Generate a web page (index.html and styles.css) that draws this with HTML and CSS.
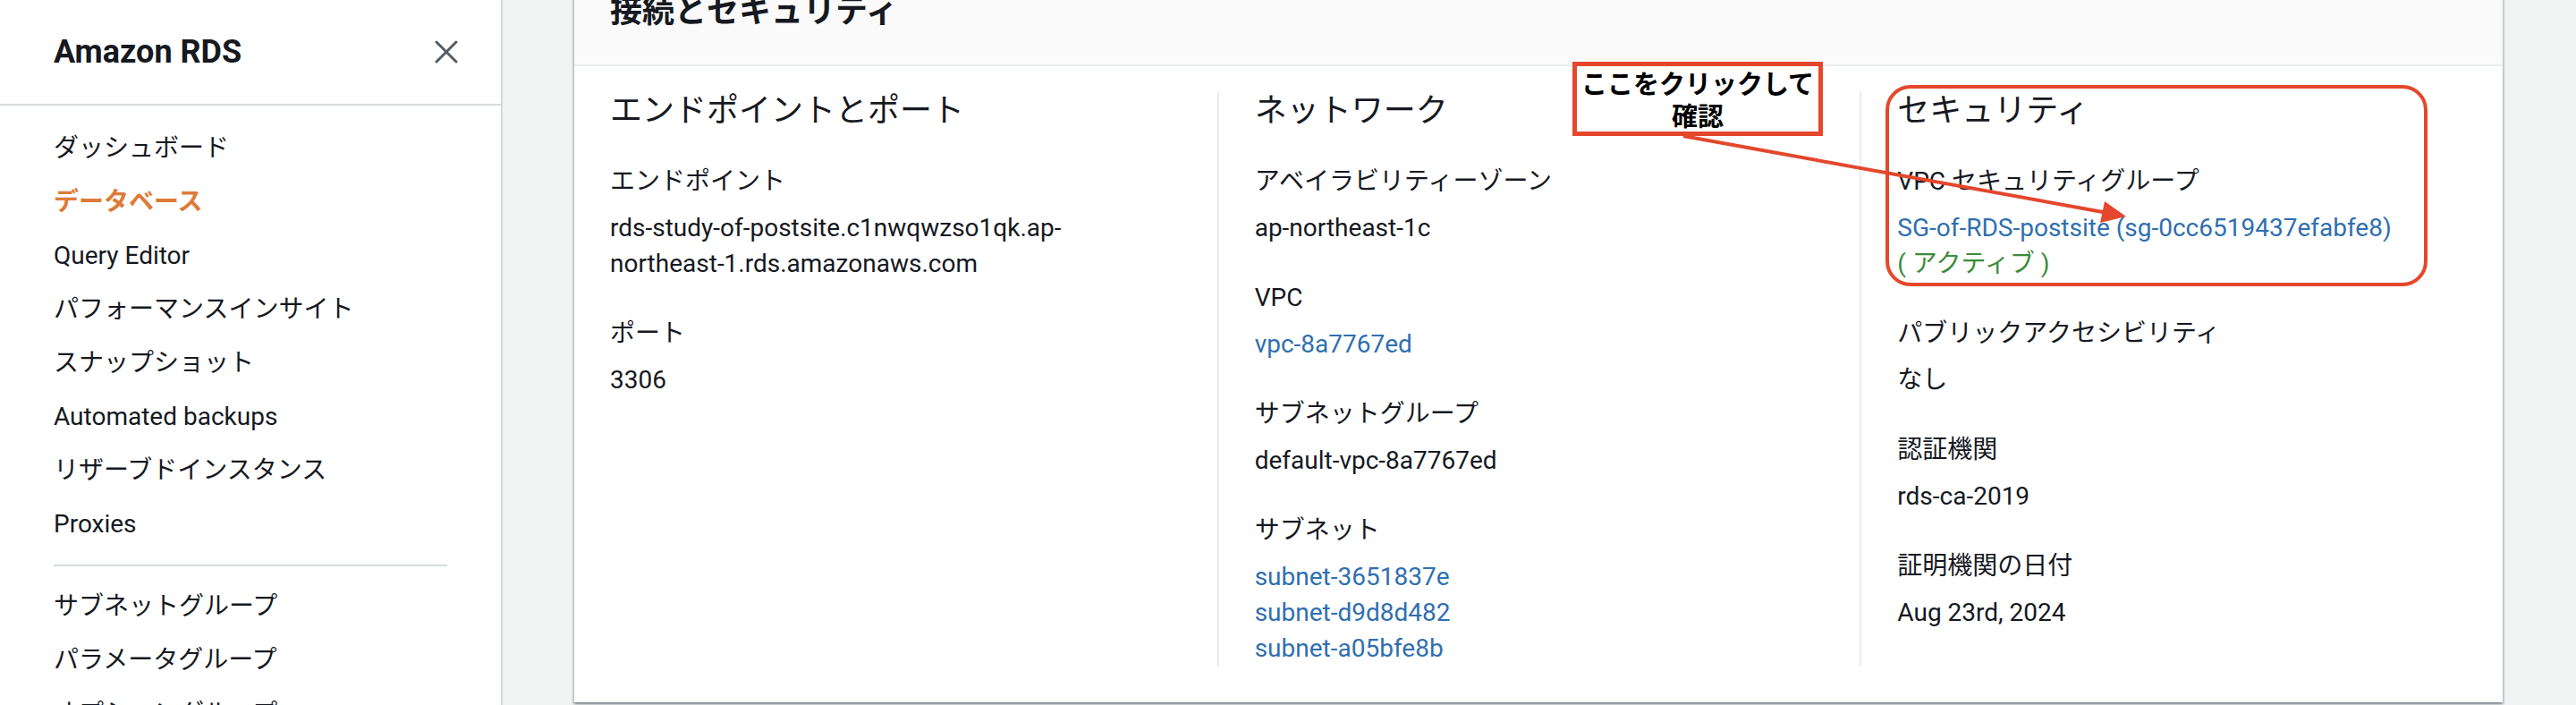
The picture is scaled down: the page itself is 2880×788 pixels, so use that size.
FILE: index.html
```html
<!DOCTYPE html>
<html lang="ja">
<head>
    <meta charset="UTF-8">
    <meta name="viewport" content="width=device-width, initial-scale=1.0">
    <title>Amazon RDS - 接続とセキュリティ</title>
    <link rel="stylesheet" href="styles.css">
</head>
<body>
    <aside class="sidebar">
        <div class="sidebar-header">
            <span class="brand">Amazon RDS</span>
            <svg class="close-icon" width="28" height="28" viewBox="0 0 28 28">
                <path d="M3 3 L25 25 M25 3 L3 25" stroke="#545b64" stroke-width="3" fill="none" stroke-linecap="round"/>
            </svg>
        </div>
        <nav class="nav">
            <a class="nav-item">ダッシュボード</a>
            <a class="nav-item active">データベース</a>
            <a class="nav-item">Query Editor</a>
            <a class="nav-item">パフォーマンスインサイト</a>
            <a class="nav-item">スナップショット</a>
            <a class="nav-item">Automated backups</a>
            <a class="nav-item">リザーブドインスタンス</a>
            <a class="nav-item">Proxies</a>
            <div class="nav-divider"></div>
            <a class="nav-item">サブネットグループ</a>
            <a class="nav-item">パラメータグループ</a>
            <a class="nav-item">オプショングループ</a>
        </nav>
    </aside>

    <main class="main">
        <section class="panel">
            <div class="panel-header">
                <h2>接続とセキュリティ</h2>
            </div>
            <div class="panel-body">
                <div class="column">
                    <h3>エンドポイントとポート</h3>
                    <div class="field">
                        <div class="label">エンドポイント</div>
                        <div class="value">rds-study-of-postsite.c1nwqwzso1qk.ap-<span class="nowrap">northeast-1.rds.amazonaws.com</span></div>
                    </div>
                    <div class="field">
                        <div class="label">ポート</div>
                        <div class="value">3306</div>
                    </div>
                </div>
                <div class="column">
                    <h3>ネットワーク</h3>
                    <div class="field">
                        <div class="label">アベイラビリティーゾーン</div>
                        <div class="value">ap-northeast-1c</div>
                    </div>
                    <div class="field">
                        <div class="label">VPC</div>
                        <div class="value"><a class="link">vpc-8a7767ed</a></div>
                    </div>
                    <div class="field">
                        <div class="label">サブネットグループ</div>
                        <div class="value">default-vpc-8a7767ed</div>
                    </div>
                    <div class="field">
                        <div class="label">サブネット</div>
                        <div class="value"><a class="link">subnet-3651837e</a></div>
                        <div class="value"><a class="link">subnet-d9d8d482</a></div>
                        <div class="value"><a class="link">subnet-a05bfe8b</a></div>
                    </div>
                </div>
                <div class="column">
                    <h3>セキュリティ</h3>
                    <div class="field">
                        <div class="label">VPC セキュリティグループ</div>
                        <div class="value"><a class="link">SG-of-RDS-postsite (sg-0cc6519437efabfe8)</a></div>
                        <div class="value status">( アクティブ )</div>
                    </div>
                    <div class="field">
                        <div class="label">パブリックアクセシビリティ</div>
                        <div class="value">なし</div>
                    </div>
                    <div class="field">
                        <div class="label">認証機関</div>
                        <div class="value">rds-ca-2019</div>
                    </div>
                    <div class="field">
                        <div class="label">証明機関の日付</div>
                        <div class="value">Aug 23rd, 2024</div>
                    </div>
                </div>
            </div>
        </section>
    </main>

    <!-- annotations drawn on top of the screenshot -->
    <div class="annotations">
        <svg class="arrow" width="2880" height="788" viewBox="0 0 2880 788">
            <line x1="1882" y1="152" x2="2351" y2="237" stroke="#e4472c" stroke-width="4"/>
            <polygon points="2377,242 2348,249 2353,225" fill="#e4472c"/>
        </svg>
        <div class="note">ここをクリックして<br>確認</div>
        <div class="highlight"></div>
    </div>
</body>
</html>
```

FILE: styles.css
```css
body {
    font-family: Roboto, "Noto Sans CJK JP", sans-serif;
    font-size: 28px;
    color: #16191f;
    margin: 0;
    padding: 0;
    display: flex;
    height: 788px;
    overflow: hidden;
    background-color: #f2f3f3;
    position: relative;
}

/* sidebar */
.sidebar {
    width: 560px;
    flex-shrink: 0;
    background-color: #ffffff;
    border-right: 2px solid #d5dbdb;
}
.sidebar-header {
    height: 116px;
    display: flex;
    align-items: center;
    justify-content: space-between;
    padding: 0 47px 0 60px;
    border-bottom: 2px solid #d5dbdb;
}
.brand {
    font-size: 36px;
    font-weight: bold;
}
.close-icon {
    display: block;
}
.nav {
    padding-top: 18px;
}
.nav-item {
    display: block;
    padding: 10px 60px;
    line-height: 40px;
    color: #16191f;
    white-space: nowrap;
}
.nav-item.active {
    color: #dd7b37;
    font-weight: bold;
}
.nav-divider {
    height: 2px;
    background-color: #d5dbdb;
    margin: 15px 60px;
}

/* main panel */
.main {
    flex: 1;
    padding: 0 82px 0 80px;
}
.panel {
    margin-top: -30px;
    background-color: #ffffff;
    box-shadow: 0 2px 2px rgba(0, 28, 36, 0.3), 2px 2px 2px rgba(0, 28, 36, 0.15), -2px 2px 2px rgba(0, 28, 36, 0.15);
}
.panel-header {
    background-color: #fafafa;
    padding: 21px 40px 37px;
    border-bottom: 2px solid #eaeded;
}
.panel-header h2 {
    margin: 0;
    font-size: 36px;
    line-height: 44px;
    font-weight: bold;
}
.panel-body {
    display: grid;
    grid-template-columns: 1fr 1fr 1fr;
    padding: 28px 0 40px;
}
.column {
    padding: 0 40px;
}
.column + .column {
    border-left: 2px solid #eaeded;
}
.column h3 {
    margin: 0 0 37px;
    font-size: 36px;
    line-height: 44px;
    font-weight: normal;
}
.field {
    margin-bottom: 38px;
}
.field:last-child {
    margin-bottom: 0;
}
.label {
    line-height: 40px;
    margin-bottom: 12px;
}
.value {
    line-height: 40px;
}
.nowrap {
    white-space: nowrap;
}
.link {
    color: #2f6fb0;
    text-decoration: none;
}
.status {
    color: #3b8c3b;
}

/* annotation overlay */
.annotations {
    position: absolute;
    top: 0;
    left: 0;
    width: 2880px;
    height: 788px;
    pointer-events: none;
}
.arrow {
    position: absolute;
    top: 0;
    left: 0;
}
.note {
    position: absolute;
    left: 1758px;
    top: 69px;
    width: 280px;
    height: 83px;
    box-sizing: border-box;
    border: 5px solid #e4472c;
    background-color: #ffffff;
    color: #000000;
    font-family: "Noto Sans CJK JP", sans-serif;
    font-size: 29px;
    font-weight: bold;
    line-height: 36px;
    text-align: center;
    white-space: nowrap;
}
.highlight {
    position: absolute;
    left: 2108px;
    top: 95px;
    width: 606px;
    height: 225px;
    box-sizing: border-box;
    border: 4px solid #e4472c;
    border-radius: 28px;
}
```
